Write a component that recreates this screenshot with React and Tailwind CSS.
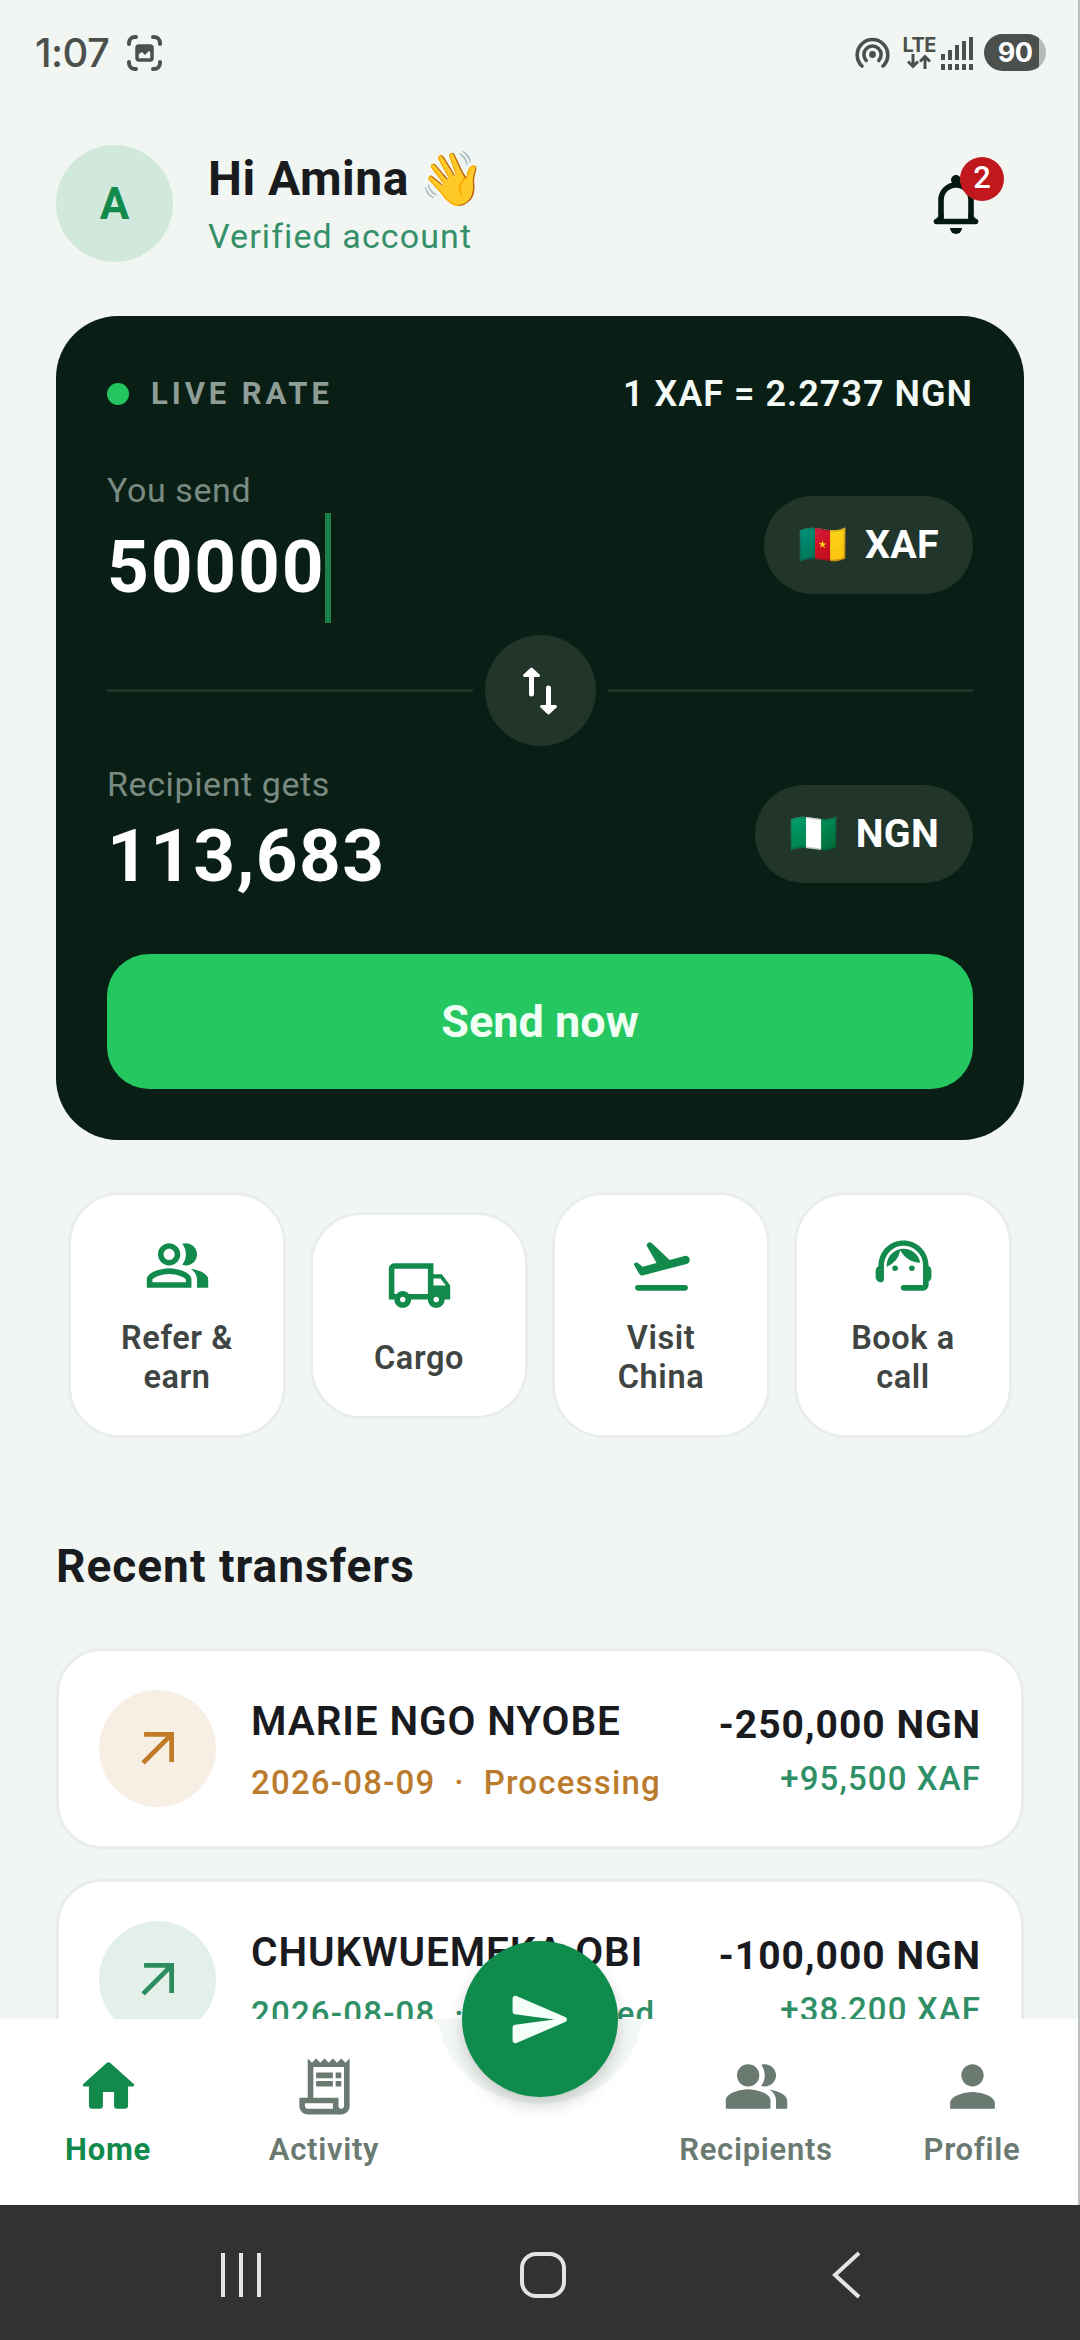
import { useState } from 'react';
import { MdOutlineLocalShipping, MdOutlinePeopleAlt, MdOutlineReceiptLong, MdPeopleAlt, MdPerson } from 'react-icons/md';

const transfers = [
  { name: 'MARIE NGO NYOBE', date: '2026-08-09', status: 'Processing', sent: '-250,000 NGN', received: '+95,500 XAF' },
  { name: 'CHUKWUEMEKA OBI', date: '2026-08-08', status: 'Completed', sent: '-100,000 NGN', received: '+38,200 XAF' },
];

function TakeoffIcon({ className }) {
  return (
    <svg className={className} viewBox="0 0 24 24" fill="currentColor">
      <path d="M3.5 19h17c.55 0 1 .45 1 1s-.45 1-1 1h-17c-.55 0-1-.45-1-1s.45-1 1-1z" />
      <path d="M22.07 9.64c-.21-.8-1.04-1.28-1.84-1.06L14.92 10 8.46 3.98c-.27-.25-.65-.34-1-.25-.64.17-.94.91-.61 1.49l3.38 5.86-4.97 1.33-1.57-1.24a.98.98 0 0 0-.87-.18l-.33.09c-.32.09-.47.45-.31.74l1.88 3.25c.23.39.69.58 1.12.47L21 11.49c.81-.23 1.28-1.05 1.07-1.85z" />
    </svg>
  );
}

function AgentIcon({ className }) {
  return (
    <svg className={className} viewBox="0 0 24 24" fill="currentColor">
      <path d="M21 12.22C21 6.73 16.74 3 12 3c-4.69 0-9 3.65-9 9.28-.6.34-1 .98-1 1.72v2c0 1.1.9 2 2 2 .55 0 1-.45 1-1v-4.81c0-3.83 2.95-7.18 6.78-7.29A7.007 7.007 0 0 1 19 11.9V19h-7c-.55 0-1 .45-1 1s.45 1 1 1h7c1.1 0 2-.9 2-2v-1.22c.59-.31 1-.92 1-1.64v-2.3c0-.7-.41-1.31-1-1.62z" />
      <circle cx="9" cy="13" r="1" />
      <circle cx="15" cy="13" r="1" />
      <path d="M18 11.03A6.04 6.04 0 0 0 12.05 6c-3.03 0-6.29 2.51-6.03 6.45a8.075 8.075 0 0 0 4.86-5.89c1.31 2.63 4 4.44 7.12 4.47z" />
    </svg>
  );
}

function HomeIcon({ className }) {
  return (
    <svg className={className} viewBox="0 0 24 24" fill="currentColor">
      <path d="M10 19v-5h4v5c0 .55.45 1 1 1h3c.55 0 1-.45 1-1v-7h1.7c.46 0 .68-.57.33-.87L12.67 3.6c-.38-.34-.96-.34-1.34 0l-8.36 7.53c-.34.3-.13.87.33.87H5v7c0 .55.45 1 1 1h3c.55 0 1-.45 1-1z" />
    </svg>
  );
}

function ArrowUpRight({ className }) {
  return (
    <svg className={className} viewBox="0 0 32 32" fill="none" stroke="currentColor" strokeWidth="4.6">
      <path d="M3 2.300h26.700V29M29 3 2 30" />
    </svg>
  );
}

function StatusBar() {
  return (
    <div className="flex h-[105px] shrink-0 items-center justify-between pl-[35px] pr-[34px] text-[#4b504d]">
      <div className="flex items-center gap-[18px]">
        <span className="font-['Inter',sans-serif] text-[40px] font-medium leading-none tracking-[-0.6px]">1:07</span>
        <svg className="h-9 w-[35px]" viewBox="0 0 35 36" fill="none" stroke="currentColor" strokeWidth="4" strokeLinecap="round">
          <path d="M2 9V8a6 6 0 0 1 6-6h1M26 2h1a6 6 0 0 1 6 6v1M33 27v1a6 6 0 0 1-6 6h-1M9 34H8a6 6 0 0 1-6-6v-1" />
          <rect x="10" y="11" width="15" height="14" rx="2" strokeWidth="3.5" />
          <path d="M10 18v-6h15v7l-3-3-4 4-3-3-3 2z" fill="currentColor" stroke="none" />
        </svg>
      </div>
      <div className="flex items-center">
        <svg className="h-[33px] w-[35px]" viewBox="0 0 35 33" fill="none" stroke="currentColor" strokeWidth="3.6" strokeLinecap="round">
          <path d="M7 30A15.3 15.3 0 1 1 28 30M11.2 24.5a8.6 8.6 0 1 1 12.6 0" />
          <circle cx="17.5" cy="18.5" r="3.4" fill="currentColor" stroke="none" />
        </svg>
        <div className="ml-[13px] flex flex-col items-center">
          <span className="font-['Inter',sans-serif] text-[20px] font-bold leading-[18px] tracking-[-0.5px]">LTE</span>
          <svg className="h-[15px] w-6" viewBox="0 0 24 15" fill="none" stroke="currentColor" strokeWidth="3">
            <path d="M6 0v12M1 7.500l5 5 5-5M18 15V3M13 7.500l5-5 5 5" />
          </svg>
        </div>
        <svg className="ml-[5px] h-[34px] w-8" viewBox="0 0 32 34" fill="currentColor">
          <path d="M0 18h4v6H0zM7 14h4v10H7zM14 9h4v15h-4zM21 5h4v19h-4zM28 1h4v23h-4z" />
          <path d="M0 28h4v6H0zM7 28h4v6H7zM14 28h4v6h-4zM21 28h4v6h-4zM28 28h4v6h-4z" />
        </svg>
        <div className="ml-[11px] flex h-[37px] w-[62px] items-center justify-center rounded-full bg-linear-to-r from-[#4b504d] from-88% to-[#b4bab6] to-88%">
          <span className="font-['Inter',sans-serif] text-[27px] font-bold leading-none tracking-[-0.5px] text-white">90</span>
        </div>
      </div>
    </div>
  );
}

function Header() {
  return (
    <header className="mt-10 flex h-[117px] items-center">
      <div className="flex size-[117px] items-center justify-center rounded-full bg-[#d1e8dc] text-[44px] font-bold text-[#118a4c]">A</div>
      <div className="ml-[35px] pt-1.5">
        <div className="flex items-center gap-[10px] text-[48px] font-bold leading-[58px] text-[#1a1b1f]">
          <span className="tracking-[0.5px]">Hi Amina</span>
          <span className="text-[53px]">👋</span>
        </div>
        <p className="text-[34px] leading-[56px] tracking-[1.1px] text-[#35906a]">Verified account</p>
      </div>
      <button className="relative mr-[45px] ml-auto">
        <svg className="h-[60px] w-[46px]" viewBox="0 0 46 60" fill="none" stroke="#03190f" strokeWidth="5.6">
          <path d="M8 46V26a15 15 0 0 1 30 0v20" />
          <path d="M3.500 47.500h39" strokeWidth="5.600" strokeLinecap="round" />
          <path d="M4 46.500l5-4.500M42 46.500l-5-4.500" strokeWidth="4" strokeLinecap="round" />
          <circle cx="23" cy="6" r="5" fill="#03190f" stroke="none" />
          <path d="M17 54h12a6 6 0 0 1-12 0z" fill="#03190f" stroke="none" />
        </svg>
        <span className="absolute -top-[17px] left-[27px] flex size-11 items-center justify-center rounded-full bg-[#c0181c] text-[31px] font-medium text-white">2</span>
      </button>
    </header>
  );
}

function CurrencyPill({ flag, code }) {
  return (
    <button className="flex h-[98px] items-center gap-[18px] rounded-full bg-[#22352b] px-[34px] text-[39.4px] font-bold text-white">
      <span className="text-[39.4px] leading-none">{flag}</span>
      <span className="tracking-[0.3px]">{code}</span>
    </button>
  );
}

function RateCard() {
  const [amount] = useState('50000');

  return (
    <section className="mt-[54px] rounded-[62px] bg-[#091f15] px-[51px] pt-[58px] pb-[51px] text-white">
      <div className="flex h-10 items-center">
        <span className="size-[22px] rounded-full bg-[#22c55e]" />
        <span className="ml-[22px] text-[31px] font-bold tracking-[3.9px] text-[#8e9d95]">LIVE RATE</span>
        <span className="ml-auto text-[36px] font-semibold tracking-[1px] text-[#f4faf6]">1 XAF = 2.2737 NGN</span>
      </div>

      <div className="mt-14 flex h-[149px] items-center justify-between">
        <div>
          <p className="text-[34px] leading-10 tracking-[0.6px] text-[#7a8a81]">You send</p>
          <div className="flex h-[109px] items-center pt-[6px]">
            <span className="text-[73px] font-bold tracking-[1.8px]">{amount}</span>
            <span className="h-[110px] w-[6px] bg-[#1c8049]" />
          </div>
        </div>
        <CurrencyPill flag="🇨🇲" code="XAF" />
      </div>

      <div className="mt-4 flex items-center gap-3">
        <div className="h-[3px] flex-1 bg-[#20342a]" />
        <button className="flex size-[111px] items-center justify-center rounded-full bg-[#22352b]">
          <svg className="h-[50px] w-9" viewBox="0 0 36 50" fill="none" stroke="white" strokeWidth="5" strokeLinecap="round" strokeLinejoin="round">
            <path d="M9.500 28V6M26.500 22v22" />
            <path d="M9.500 3 2.500 9.500h14zM26.500 47l-7-6.500h14z" fill="white" strokeWidth="3" />
          </svg>
        </button>
        <div className="h-[3px] flex-1 bg-[#20342a]" />
      </div>

      <div className="mt-[18px] flex items-center justify-between">
        <div>
          <p className="text-[34px] leading-10 tracking-[0.6px] text-[#7a8a81]">Recipient gets</p>
          <p className="h-[100px] text-[73px] font-bold leading-[104px] tracking-[1.3px]">113,683</p>
        </div>
        <CurrencyPill flag="🇳🇬" code="NGN" />
      </div>

      <button className="mt-[50px] h-[135px] w-full rounded-[42px] bg-[#25c760] text-[45px] font-bold text-[#effff4]">Send now</button>
    </section>
  );
}

function ActionTile({ icon: Icon, children }) {
  return (
    <button className="flex w-[218px] flex-col items-center rounded-[52px] border-[3px] border-[#e9eeea] bg-white pt-[37px] pb-[38px]">
      <Icon className="size-[67px] text-[#118a4c]" />
      <span className="mt-[20px] w-[130px] text-center text-[32.5px] font-semibold leading-[39px] tracking-[0.6px] text-[#3f4542]">{children}</span>
    </button>
  );
}

function TransferRow({ transfer }) {
  const pending = transfer.status === 'Processing';

  return (
    <li className="flex h-[201px] shrink-0 items-center rounded-[46px] border-[3px] border-[#e9eeea] bg-white px-10">
      <div className={`flex size-[117px] items-center justify-center rounded-full ${pending ? 'bg-[#f7eee4] text-[#c17a26]' : 'bg-[#e3f0e9] text-[#2b8c5f]'}`}>
        <ArrowUpRight className="size-[33px]" />
      </div>
      <div className="ml-[35px] pt-1.5">
        <p className="text-[40.5px] font-semibold leading-[62px] tracking-[0.9px] text-[#1a1b1f]">{transfer.name}</p>
        <p className={`whitespace-pre text-[33px] font-medium leading-[62px] tracking-[1.2px] ${pending ? 'text-[#bb7b2c]' : 'text-[#2f8f66]'}`}>
          {transfer.date}{'  ·  '}{transfer.status}
        </p>
      </div>
      <div className="ml-auto pt-1.5 text-right">
        <p className="text-[39px] font-bold leading-[53px] tracking-[1px] text-[#1a1b1f]">{transfer.sent}</p>
        <p className="text-[33px] font-medium leading-[53px] tracking-[1.1px] text-[#2f8f66]">{transfer.received}</p>
      </div>
    </li>
  );
}

function NavItem({ icon: Icon, label, active }) {
  return (
    <button className={`flex w-[216px] flex-col items-center pt-[34px] ${active ? 'font-bold text-[#118a4c]' : 'font-semibold text-[#6a7a71]'}`}>
      <Icon className="size-[67px]" />
      <span className="mt-[10px] text-[31px] leading-[40px] tracking-[0.7px]">{label}</span>
    </button>
  );
}

function BottomNav() {
  return (
    <nav className="relative flex h-[186px] shrink-0 bg-white">
      <NavItem icon={HomeIcon} label="Home" active />
      <NavItem icon={MdOutlineReceiptLong} label="Activity" />
      <div className="w-[216px]" />
      <NavItem icon={MdPeopleAlt} label="Recipients" />
      <NavItem icon={MdPerson} label="Profile" />

      {/* notch under the floating button */}
      <svg className="absolute top-0 left-[425px] h-[104px] w-[230px]" viewBox="0 0 230 104" fill="#f3f8f5">
        <path d="M4 0C12 2 15 7 16 14a101 88 0 0 0 198 0c1-7 4-12 12-14z" />
      </svg>
      <button className="absolute -top-[78px] left-[462px] flex size-[156px] items-center justify-center rounded-full bg-[#0f8c4c] shadow-[0_8px_16px_rgba(0,0,0,0.18)]">
        <svg className="size-[67px]" viewBox="0 0 24 24" fill="#f4fff9">
          <path d="M3.4 20.4l17.45-7.48c.81-.35.81-1.49 0-1.84L3.4 3.6c-.66-.29-1.39.2-1.39.91L2 9.12c0 .5.37.93.87.99L17 12 2.87 13.88c-.5.07-.87.5-.87 1v4.61c0 .71.73 1.2 1.4.91z" />
        </svg>
      </button>
    </nav>
  );
}

function SystemNav() {
  return (
    <div className="flex h-[135px] shrink-0 items-center justify-between bg-[#323232] pt-[5px] pr-[219px] pl-[220px]">
      <svg className="h-[44px] w-[42px]" viewBox="0 0 42 44" fill="none" stroke="#e4e4e4" strokeWidth="4">
        <path d="M3 0v44M21 0v44M39 0v44" />
      </svg>
      <svg className="mr-[9px] h-[46px] w-[46px]" viewBox="0 0 46 46" fill="none" stroke="#e4e4e4" strokeWidth="4">
        <rect x="2" y="2" width="42" height="42" rx="14" />
      </svg>
      <svg className="h-[48px] w-[29px]" viewBox="0 0 29 48" fill="none" stroke="#e4e4e4" strokeWidth="4">
        <path d="M27 2 3 24l24 22" />
      </svg>
    </div>
  );
}

export default function App() {
  return (
    <div className="relative flex h-[2340px] w-[1080px] flex-col overflow-hidden bg-[#f1f6f2] font-['Roboto',sans-serif]">
      <StatusBar />
      <main className="min-h-0 flex-1 overflow-hidden px-14">
        <Header />
        <RateCard />
        <div className="mt-[52px] flex items-center justify-between px-3">
          <ActionTile icon={MdOutlinePeopleAlt}>Refer & earn</ActionTile>
          <ActionTile icon={MdOutlineLocalShipping}>Cargo</ActionTile>
          <ActionTile icon={TakeoffIcon}>Visit<br />China</ActionTile>
          <ActionTile icon={AgentIcon}>Book a call</ActionTile>
        </div>
        <h2 className="mt-[98px] text-[46px] font-bold leading-[60px] tracking-[1px] text-[#1a1b1f]">Recent transfers</h2>
        <ul className="mt-[52px] flex flex-col gap-[30px]">
          {transfers.map((t) => (
            <TransferRow key={t.name} transfer={t} />
          ))}
        </ul>
      </main>
      <BottomNav />
      <SystemNav />
      <div className="absolute top-0 right-0 h-[2205px] w-[2px] bg-[#b9bfbb]" />
    </div>
  );
}
